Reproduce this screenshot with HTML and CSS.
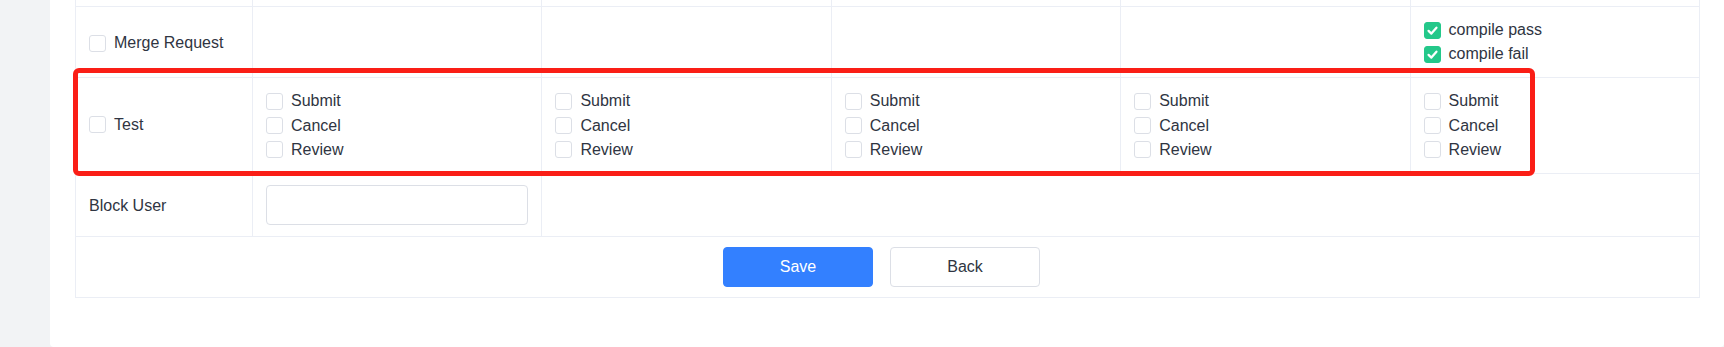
FILE: index.html
```html
<!DOCTYPE html>
<html lang="en">
<head>
  <meta charset="UTF-8">
  <title>Notify Settings</title>
  <link rel="stylesheet" href="styles.css">
</head>
<body>

  <div class="panel">
    <div class="grid">

      <!-- top of the previous row, scrolled off -->
      <div class="row stub">
        <div class="cell"></div><div class="cell"></div><div class="cell"></div>
        <div class="cell"></div><div class="cell"></div><div class="cell"></div>
      </div>

      <!-- Merge Request -->
      <div class="row">
        <div class="cell label-cell">
          <label class="check"><span class="box"></span>Merge Request</label>
        </div>
        <div class="cell"></div>
        <div class="cell"></div>
        <div class="cell"></div>
        <div class="cell"></div>
        <div class="cell">
          <label class="check"><span class="box on"><svg viewBox="0 0 16 16"><polyline points="3.8,8.4 6.8,11.3 12.2,5"/></svg></span>compile pass</label>
          <label class="check"><span class="box on"><svg viewBox="0 0 16 16"><polyline points="3.8,8.4 6.8,11.3 12.2,5"/></svg></span>compile fail</label>
        </div>
      </div>

      <!-- Test -->
      <div class="row marked">
        <div class="cell label-cell">
          <label class="check"><span class="box"></span>Test</label>
        </div>
        <div class="cell">
          <label class="check"><span class="box"></span>Submit</label>
          <label class="check"><span class="box"></span>Cancel</label>
          <label class="check"><span class="box"></span>Review</label>
        </div>
        <div class="cell">
          <label class="check"><span class="box"></span>Submit</label>
          <label class="check"><span class="box"></span>Cancel</label>
          <label class="check"><span class="box"></span>Review</label>
        </div>
        <div class="cell">
          <label class="check"><span class="box"></span>Submit</label>
          <label class="check"><span class="box"></span>Cancel</label>
          <label class="check"><span class="box"></span>Review</label>
        </div>
        <div class="cell">
          <label class="check"><span class="box"></span>Submit</label>
          <label class="check"><span class="box"></span>Cancel</label>
          <label class="check"><span class="box"></span>Review</label>
        </div>
        <div class="cell">
          <label class="check"><span class="box"></span>Submit</label>
          <label class="check"><span class="box"></span>Cancel</label>
          <label class="check"><span class="box"></span>Review</label>
        </div>
        <div class="highlight"></div>
      </div>

      <!-- Block User -->
      <div class="row">
        <div class="cell label-cell">Block User</div>
        <div class="cell"><input type="text" class="text-input"></div>
        <div class="cell wide"></div>
      </div>

      <!-- actions -->
      <div class="row">
        <div class="cell actions">
          <button class="btn primary">Save</button>
          <button class="btn">Back</button>
        </div>
      </div>

    </div>
  </div>

</body>
</html>
```

FILE: styles.css
```css
body {
  margin: 0;
  background: #f2f3f5;
  font-family: "Liberation Sans", Arial, sans-serif;
  font-size: 16px;
  color: #2f3542;
  height: 347px;
  overflow: hidden;
}

.panel {
  margin-left: 50px;
  background: #fff;
  border-radius: 0 0 4px 4px;
  padding: 0 24px 49px 25px;
}

.grid {
  border-left: 1px solid #ebeef5;
}

.row {
  display: grid;
  grid-template-columns: 177px repeat(5, 1fr);
}

.cell {
  border-right: 1px solid #ebeef5;
  border-bottom: 1px solid #ebeef5;
  padding: 11px 13px;
  display: flex;
  flex-direction: column;
  justify-content: center;
}

.stub .cell {
  height: 6px;
  padding: 0;
}

.cell.wide {
  grid-column: span 4;
}

.label-cell {
  padding-top: 12px;
  padding-bottom: 10px;
}

.marked .label-cell {
  padding-top: 10px;
  padding-bottom: 12px;
}

.check {
  display: flex;
  align-items: center;
  line-height: 24px;
  height: 24px;
  white-space: nowrap;
}

.marked .check {
  height: 24.4px;
}

.box {
  width: 17px;
  height: 17px;
  box-sizing: border-box;
  border: 1px solid #dcdfe6;
  border-radius: 3px;
  background: #fff;
  margin-right: 8px;
  flex-shrink: 0;
}

.box.on {
  background: #24c88a;
  border-color: #24c88a;
}

.box svg {
  display: block;
  width: 15px;
  height: 15px;
}

.box polyline {
  fill: none;
  stroke: #fff;
  stroke-width: 2.4;
  stroke-linecap: round;
  stroke-linejoin: round;
}

.text-input {
  box-sizing: border-box;
  width: 100%;
  height: 40px;
  border: 1px solid #dcdfe6;
  border-radius: 4px;
  font: inherit;
  padding: 0 12px;
  outline: none;
}

.actions {
  grid-column: 1 / -1;
  flex-direction: row;
  justify-content: center;
  gap: 17px;
  padding: 10px 12px 10px 0;
}

.btn {
  width: 150px;
  height: 40px;
  font-family: inherit;
  font-size: 16px;
  color: #2f3542;
  background: #fff;
  border: 1px solid #dcdfe6;
  border-radius: 4px;
  cursor: pointer;
}

.btn.primary {
  background: #3380ff;
  border-color: #3380ff;
  color: #fff;
}

/* red annotation frame round the Test row */
.marked {
  position: relative;
}

.highlight {
  position: absolute;
  top: -10px;
  left: -3px;
  width: 1462px;
  height: 108px;
  box-sizing: border-box;
  border: 5px solid #fa1e16;
  border-radius: 6px;
  pointer-events: none;
}
```
